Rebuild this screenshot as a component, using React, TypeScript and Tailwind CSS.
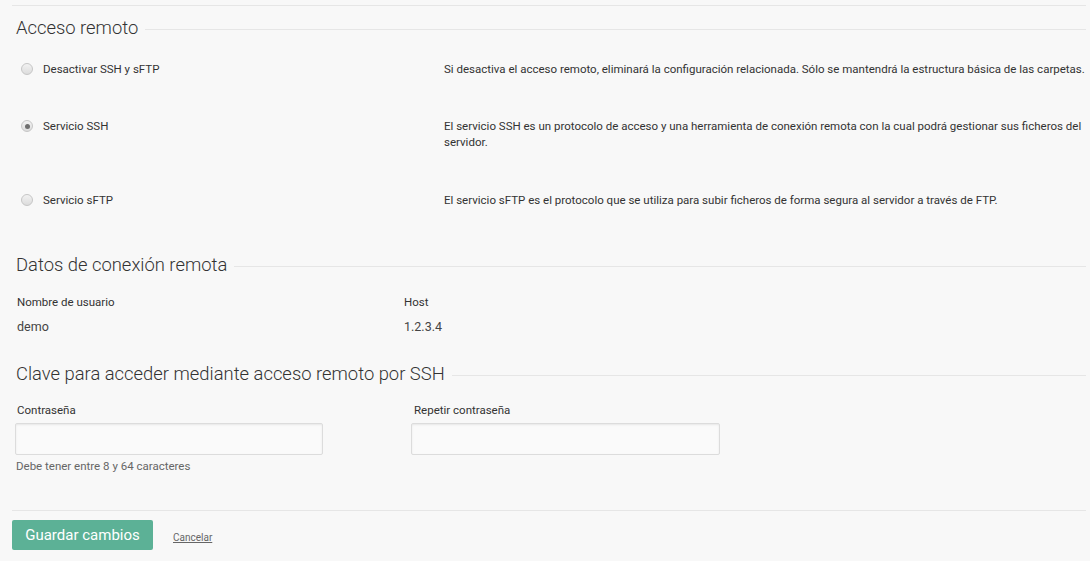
import { useState } from 'react'

const font = { fontFamily: 'Roboto, "Liberation Sans", sans-serif' }

function SectionTitle({ children, className = '' }: { children: React.ReactNode; className?: string }) {
  return (
    <div className={`flex items-center gap-[7px] pl-[4px] ${className}`}>
      <h2 className="text-[18.4px] leading-[24px] font-light text-[#333] whitespace-nowrap">{children}</h2>
      <div className="flex-1 border-t border-[#e6e6e6] mt-[2px]" />
    </div>
  )
}

function Radio({ checked, onClick }: { checked: boolean; onClick: () => void }) {
  return (
    <span
      onClick={onClick}
      className="w-[12px] h-[12px] rounded-full border border-[#c6c6c6] bg-gradient-to-b from-[#f2f2f2] to-[#dcdcdc] flex items-center justify-center flex-shrink-0 cursor-pointer"
    >
      {checked && <span className="w-[5px] h-[5px] rounded-full bg-[#6e6e6e]" />}
    </span>
  )
}

const options = [
  {
    id: 'off',
    label: 'Desactivar SSH y sFTP',
    desc: 'Si desactiva el acceso remoto, eliminará la configuración relacionada. Sólo se mantendrá la estructura básica de las carpetas.',
    mt: 'mt-[21px]',
  },
  {
    id: 'ssh',
    label: 'Servicio SSH',
    desc: 'El servicio SSH es un protocolo de acceso y una herramienta de conexión remota con la cual podrá gestionar sus ficheros del servidor.',
    mt: 'mt-[41px]',
  },
  {
    id: 'sftp',
    label: 'Servicio sFTP',
    desc: 'El servicio sFTP es el protocolo que se utiliza para subir ficheros de forma segura al servidor a través de FTP.',
    mt: 'mt-[42px]',
  },
]

export default function App() {
  const [mode, setMode] = useState('ssh')

  return (
    <div className="min-h-screen bg-[#f8f8f8]" style={font}>
      <div className="ml-[12px] mr-[4px] pt-[5px]">
        <div className="border-t border-[#e6e6e6]" />

        {/* Acceso remoto */}
        <SectionTitle className="mt-[10px]">Acceso remoto</SectionTitle>
        {options.map((o) => (
          <div key={o.id} className={`flex ${o.mt}`}>
            <div className="w-[432px] flex-shrink-0 flex items-center gap-[10px] pl-[9px] h-[16px]">
              <Radio checked={mode === o.id} onClick={() => setMode(o.id)} />
              <span className="text-[11.5px] leading-[16px] text-[#333]">{o.label}</span>
            </div>
            <p className="flex-1 text-[11.5px] leading-[16px] text-[#333]">{o.desc}</p>
          </div>
        ))}

        {/* Datos de conexión */}
        <SectionTitle className="mt-[45px]">Datos de conexión remota</SectionTitle>
        <div className="flex pl-[5px] mt-[17px]">
          <div className="w-[387px]">
            <div className="text-[11.5px] leading-[16px] text-[#333]">Nombre de usuario</div>
            <div className="text-[12.5px] leading-[18px] text-[#444] mt-[8px]">demo</div>
          </div>
          <div>
            <div className="text-[11.5px] leading-[16px] text-[#333]">Host</div>
            <div className="text-[12.5px] leading-[18px] text-[#444] mt-[8px]">1.2.3.4</div>
          </div>
        </div>

        {/* Clave */}
        <SectionTitle className="mt-[26px]">Clave para acceder mediante acceso remoto por SSH</SectionTitle>
        <div className="flex pl-[3px] mt-[16px]">
          <div className="w-[396px]">
            <label className="block pl-[2px] text-[11.5px] leading-[16px] text-[#333]">Contraseña</label>
            <input
              type="password"
              className="mt-[5px] block w-[308px] h-[32px] bg-[#fafafa] border border-[#dcdcdc] rounded-[2px] shadow-[inset_0_1px_2px_rgba(0,0,0,0.08)] outline-none px-2"
            />
            <div className="mt-[3px] pl-[1px] text-[11.5px] leading-[16px] text-[#666]">Debe tener entre 8 y 64 caracteres</div>
          </div>
          <div>
            <label className="block pl-[3px] text-[11.5px] leading-[16px] text-[#333]">Repetir contraseña</label>
            <input
              type="password"
              className="mt-[5px] block w-[309px] h-[32px] bg-[#fafafa] border border-[#dcdcdc] rounded-[2px] shadow-[inset_0_1px_2px_rgba(0,0,0,0.08)] outline-none px-2"
            />
          </div>
        </div>

        {/* Actions */}
        <div className="mt-[36px] border-t border-[#e6e6e6]" />
        <div className="flex items-center gap-[20px] mt-[9px]">
          <button className="h-[30px] w-[141px] rounded-[2px] bg-[#5cb196] text-white text-[15px] leading-[30px]">
            Guardar cambios
          </button>
          <a href="#" className="text-[10px] text-[#666] underline mt-[5px]">Cancelar</a>
        </div>
      </div>
    </div>
  )
}
